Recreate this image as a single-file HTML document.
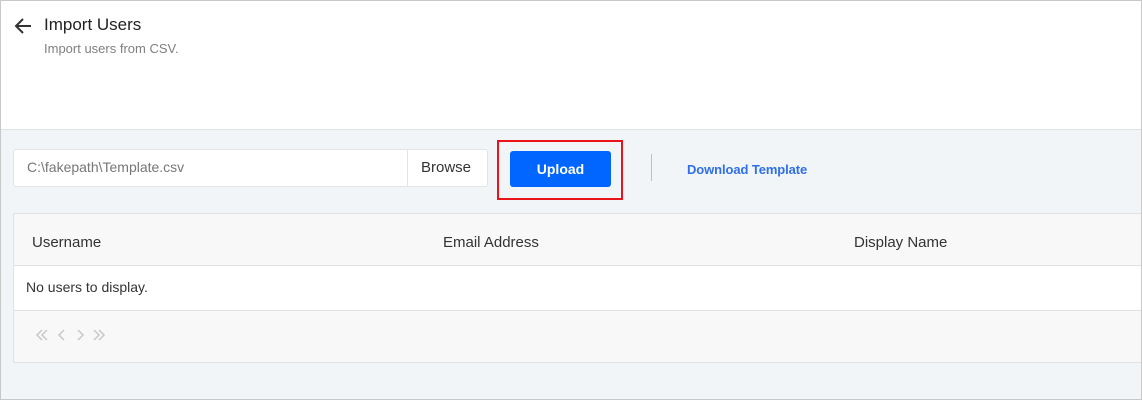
<!DOCTYPE html>
<html><head><style>
*{box-sizing:border-box;margin:0;padding:0}
body{width:1142px;height:400px;overflow:hidden;font-family:"Liberation Sans",sans-serif;background:#fff}
.wrap{position:absolute;left:0;top:0;width:1142px;height:400px;background:#f2f5f8}
.hdr{position:absolute;left:0;top:0;width:1142px;height:130px;background:#fff;border-bottom:1px solid #e0e3e6}
.t{position:absolute;left:44px;top:15px;font-size:17px;color:#222}
.s{position:absolute;left:44px;top:41px;font-size:13px;color:#808080}
.abs{position:absolute}
</style></head><body><div class="wrap">
<div class="hdr">
<svg class="abs" style="left:13px;top:17px" width="20" height="18" viewBox="0 0 20 18"><path d="M18 9H3M10 2L3 9l7 7" fill="none" stroke="#333" stroke-width="2"/></svg>
<div class="t">Import Users</div>
<div class="s">Import users from CSV.</div>
</div>
<div class="abs" style="left:13px;top:149px;width:475px;height:38px;background:#fff;border:1px solid #e2e4e6;border-radius:3px"></div>
<div class="abs" style="left:27px;top:159px;font-size:14px;color:#777">C:\fakepath\Template.csv</div>
<div class="abs" style="left:407px;top:149px;width:1px;height:38px;background:#e2e4e6"></div>
<div class="abs" style="left:421px;top:159px;font-size:15px;color:#333">Browse</div>
<div class="abs" style="left:497px;top:140px;width:126px;height:60px;border:2px solid #e8141a"></div>
<div class="abs" style="left:510px;top:151px;width:101px;height:36px;background:#0066ff;border-radius:3px;color:#fff;font-weight:bold;font-size:14px;text-align:center;line-height:37px">Upload</div>
<div class="abs" style="left:651px;top:154px;width:1px;height:27px;background:#c0c0c0"></div>
<div class="abs" style="left:687px;top:162px;font-size:13px;color:#2f6fe8;font-weight:bold;letter-spacing:-0.1px">Download Template</div>
<div class="abs" style="left:13px;top:213px;width:1129px;height:150px;background:#f8f8f8;border:1px solid #e2e2e2;border-right:none"></div>
<div class="abs" style="left:14px;top:265px;width:1128px;height:46px;background:#fff;border-top:1px solid #e2e2e2;border-bottom:1px solid #e2e2e2"></div>
<div class="abs" style="left:32px;top:234px;font-size:15px;color:#333">Username</div>
<div class="abs" style="left:443px;top:234px;font-size:15px;color:#333">Email Address</div>
<div class="abs" style="left:854px;top:234px;font-size:15px;color:#333">Display Name</div>
<div class="abs" style="left:26px;top:279px;font-size:14px;color:#333">No users to display.</div>
<svg class="abs" style="left:34px;top:327px" width="74" height="16" viewBox="0 0 74 16" fill="none" stroke="#c8c8c8" stroke-width="1.5"><path d="M8 3L3 8l5 5M13 3L8 8l5 5M30 3l-5 5 5 5M44 3l5 5-5 5M60 3l5 5-5 5M65 3l5 5-5 5"/></svg>
<div class="abs" style="left:0;top:0;width:1142px;height:400px;border:1px solid #c8c8c8"></div>
</div></body></html>
